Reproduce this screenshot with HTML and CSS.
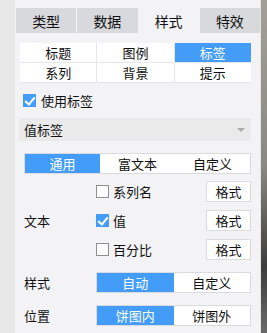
FILE: index.html
```html
<!DOCTYPE html>
<html lang="zh">
<head>
  <meta charset="UTF-8" />
  <title>标签设置</title>
  <link rel="stylesheet" href="styles.css">
</head>
<body>
  <div class="gutter"></div>

  <div class="panel">
    <!-- Top tabs -->
    <div class="tabs">
      <div class="tab">类型</div>
      <div class="tab">数据</div>
      <div class="tab active">样式</div>
      <div class="tab">特效</div>
    </div>

    <!-- Sub sections -->
    <div class="sub-grid">
      <div class="cell">标题</div>
      <div class="cell">图例</div>
      <div class="cell active">标签</div>
      <div class="cell">系列</div>
      <div class="cell">背景</div>
      <div class="cell">提示</div>
    </div>

    <label class="check-row">
      <span class="box checked"></span>使用标签
    </label>

    <div class="dropdown">
      <span>值标签</span>
      <span class="caret"></span>
    </div>

    <div class="seg seg-wide">
      <div class="seg-item active">通用</div>
      <div class="seg-item">富文本</div>
      <div class="seg-item">自定义</div>
    </div>

    <div class="text-group">
      <div class="label">文本</div>
      <div class="text-rows">
        <div class="text-row">
          <span class="box"></span><span class="opt">系列名</span>
          <button class="fmt">格式</button>
        </div>
        <div class="text-row">
          <span class="box checked"></span><span class="opt">值</span>
          <button class="fmt">格式</button>
        </div>
        <div class="text-row">
          <span class="box"></span><span class="opt">百分比</span>
          <button class="fmt">格式</button>
        </div>
      </div>
    </div>

    <div class="form-row">
      <div class="label">样式</div>
      <div class="seg">
        <div class="seg-item active">自动</div>
        <div class="seg-item">自定义</div>
      </div>
    </div>

    <div class="form-row">
      <div class="label">位置</div>
      <div class="seg">
        <div class="seg-item active">饼图内</div>
        <div class="seg-item">饼图外</div>
      </div>
    </div>
  </div>

  <div class="edge"></div>
</body>
</html>
```

FILE: styles.css
```css
* {
  margin: 0;
  padding: 0;
  box-sizing: border-box;
  font-family: "Noto Sans CJK SC", "Noto Sans", sans-serif;
}

body {
  display: flex;
  height: 333px;
  overflow: hidden;
  font-size: 13px;
  color: #111;
  background: #f3f3f5;
}

.gutter {
  width: 15px;
  background: #e8e8e8;
}

.edge {
  width: 7px;
  border-left: 1px solid #e4e4e4;
  background: linear-gradient(to bottom, #a29f99, #8a8882 50%, #3c3c3c 80%, #6a6a6a);
}

.panel {
  flex: 1;
  background: #f3f3f5;
  padding: 8px 0 0 1px;
}

.tabs {
  display: flex;
  gap: 1px;
  height: 25px;
}

.tab {
  flex: 1;
  background: #d8d9dc;
  display: flex;
  align-items: center;
  justify-content: center;
  font-size: 14px;
}

.tab.active {
  background: #f3f3f5;
}

.sub-grid {
  display: grid;
  grid-template-columns: repeat(3, 1fr);
  margin: 10px 9px 0 4px;
  background: #e6e6e8;
  gap: 1px;
  border-bottom: 1px solid #e6e6e8;
}

.cell {
  background: #fff;
  height: 19px;
  display: flex;
  align-items: center;
  justify-content: center;
}

.cell.active {
  background: #439cf7;
  color: #fff;
}

.box {
  width: 13px;
  height: 13px;
  border: 1px solid #8f8f8f;
  background: #fff;
  display: inline-block;
  position: relative;
  flex-shrink: 0;
}

.box.checked {
  background: #439cf7;
  border-color: #439cf7;
}

.box.checked::after {
  content: "";
  position: absolute;
  left: 3px;
  top: 0px;
  width: 4px;
  height: 8px;
  border: solid #fff;
  border-width: 0 2px 2px 0;
  transform: rotate(40deg);
}

.check-row {
  display: flex;
  align-items: center;
  gap: 5px;
  margin: 10px 0 0 7px;
  height: 14px;
}

.dropdown {
  margin: 11px 9px 0 3px;
  height: 23px;
  background: #eaeaea;
  display: flex;
  align-items: center;
  justify-content: space-between;
  padding: 0 6px 0 5px;
}

.caret {
  width: 0;
  height: 0;
  border-left: 4px solid transparent;
  border-right: 4px solid transparent;
  border-top: 4px solid #aaa;
}

.seg {
  display: flex;
  border: 1px solid #d9dbe0;
  background: #fff;
  height: 21px;
  flex: 1;
}

.seg-wide {
  margin: 12px 9px 0 8px;
}

.seg-item {
  flex: 1;
  display: flex;
  align-items: center;
  justify-content: center;
}

.seg-item.active {
  background: #439cf7;
  color: #fff;
}

.text-group {
  display: flex;
  align-items: center;
  margin: 7px 9px 0 8px;
}

.label {
  width: 72px;
}

.text-rows {
  flex: 1;
  display: flex;
  flex-direction: column;
  gap: 8px;
}

.text-row {
  display: flex;
  align-items: center;
  gap: 4px;
  height: 21px;
}

.opt {
  flex: 1;
}

.fmt {
  width: 45px;
  height: 21px;
  border: 1px solid #dcdcdc;
  background: #fff;
  font-size: 13px;
  color: #111;
}

.form-row {
  display: flex;
  align-items: center;
  margin: 12px 9px 0 8px;
}
```
